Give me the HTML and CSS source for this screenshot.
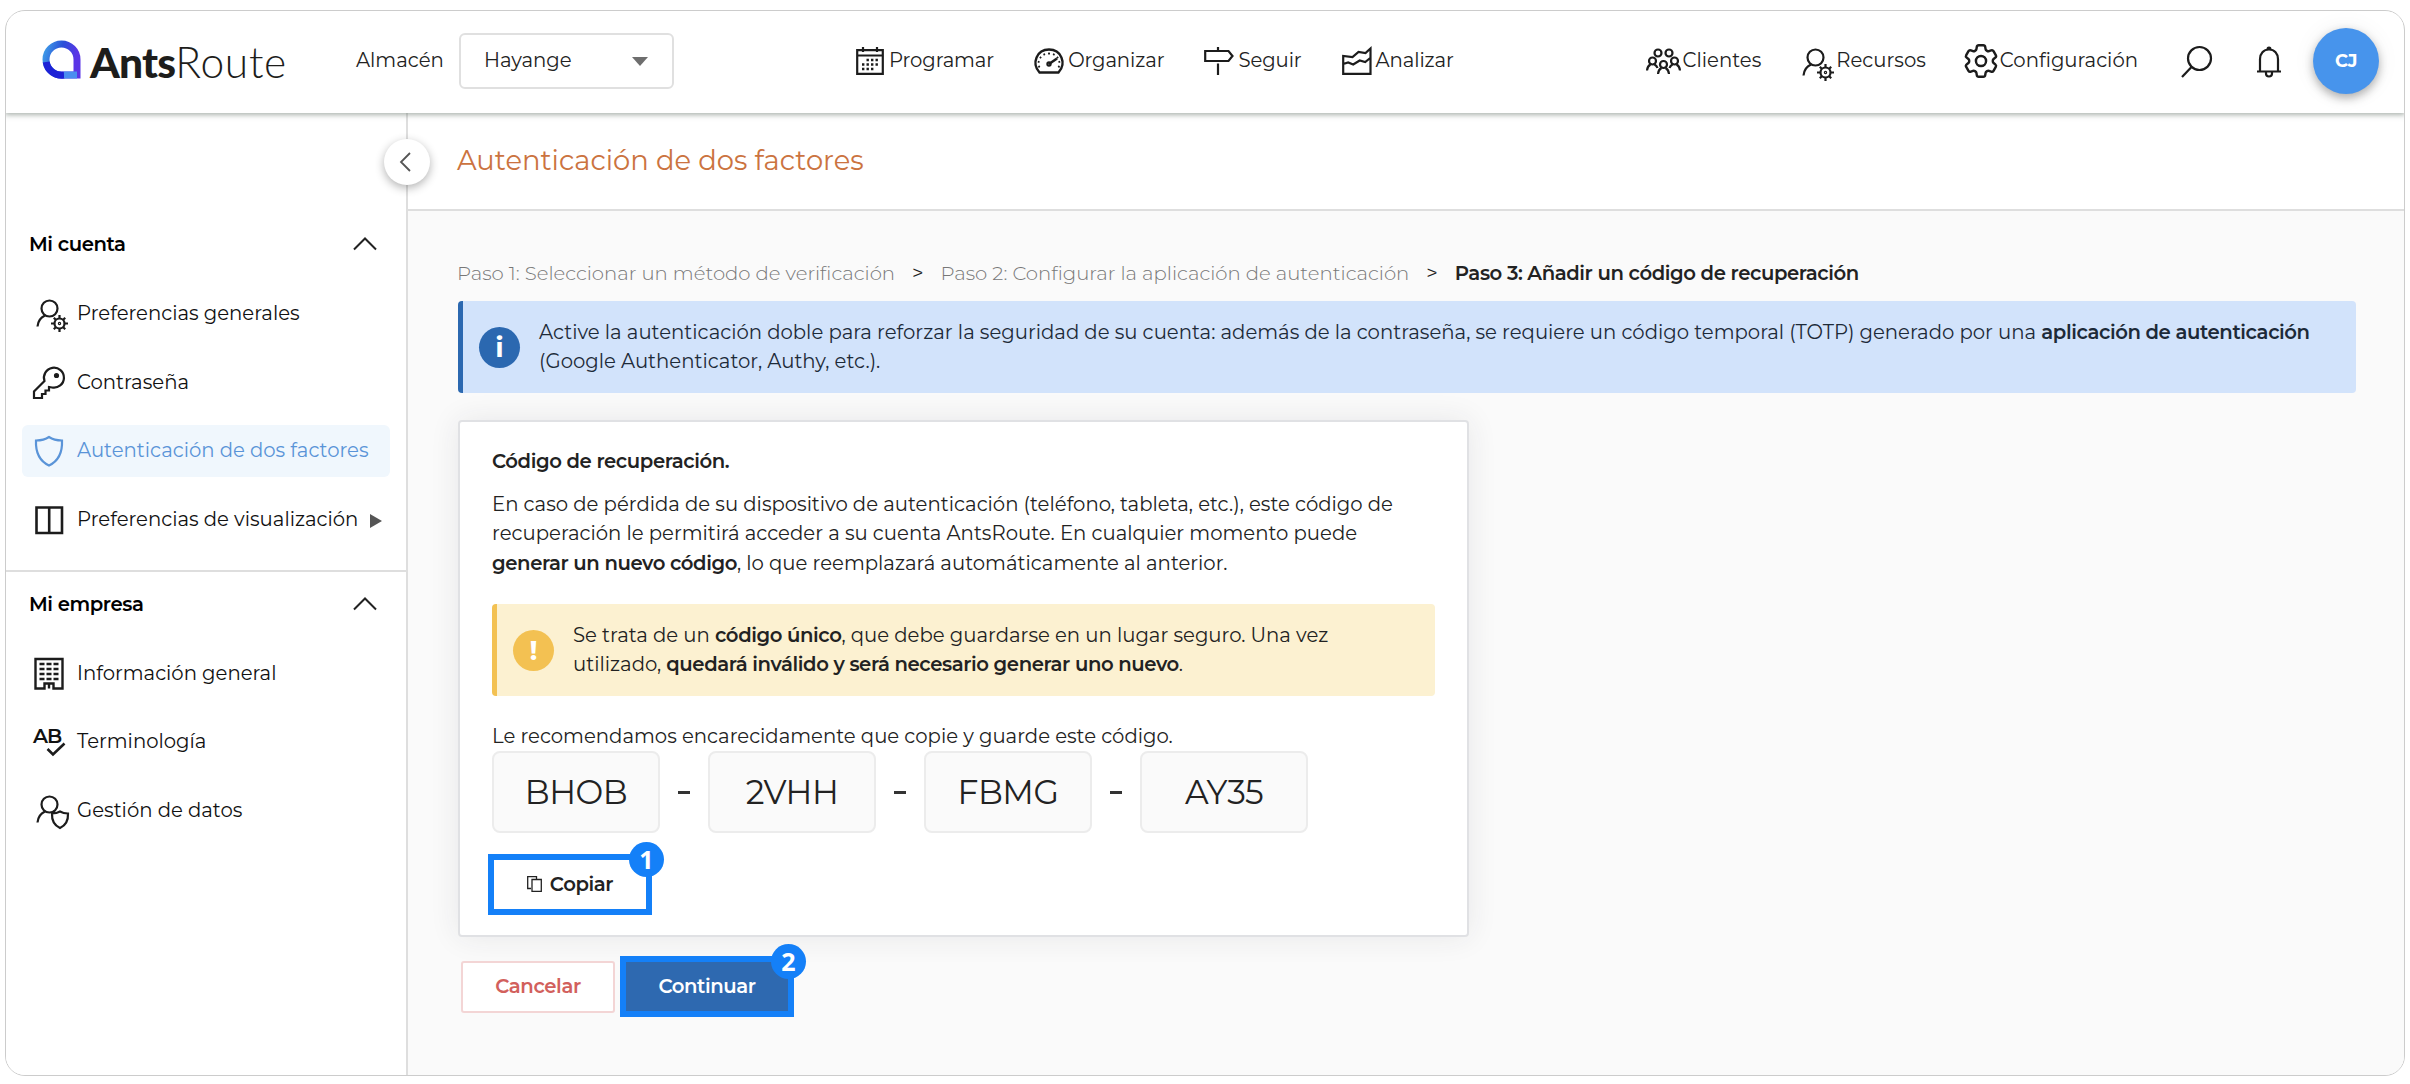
FILE: index.html
```html
<!DOCTYPE html>
<html lang="es">
<head>
    <meta charset="UTF-8">
    <meta name="viewport" content="width=device-width, initial-scale=1.0">
    <title>Autenticación de dos factores - AntsRoute</title>
    <link rel="stylesheet" href="styles.css">
</head>
<body>
    <!-- shared icons -->
    <svg class="sprite">
        <symbol id="user-gear" viewBox="0 0 34 34">
            <circle cx="13.500" cy="9.500" r="8"/>
            <path d="M9 16.500C4.500 18.500 2 22 1.500 27.500"/>
            <circle cx="23.500" cy="24.500" r="5"/>
            <circle cx="23.500" cy="24.500" r=".6"/>
            <path d="M23.500 19.500v-3.500M23.500 29.500v3.500M18.500 24.500h-3.500M28.500 24.500h3.500M20 21l-2.200-2.200M27 28l2.200 2.200M20 28l-2.200 2.200M27 21l2.200-2.200"/>
        </symbol>
        <symbol id="chevron-up" viewBox="0 0 24 14">
            <path d="M1 12.500L12 1.500l11 11"/>
        </symbol>
    </svg>

    <div class="app">
        <header class="header">
            <a class="logo">
                <svg width="39" height="39" viewBox="0 0 39 39">
                    <defs>
                        <linearGradient id="drop" x1="0" y1="0" x2="1" y2=".3">
                            <stop offset="0" stop-color="#3f9be8"/>
                            <stop offset=".5" stop-color="#2a50d8"/>
                            <stop offset="1" stop-color="#5a35e6"/>
                        </linearGradient>
                    </defs>
                    <path d="M35 19.500V35H19.500A15.500 15.500 0 1 1 35 19.500z" fill="none" stroke="url(#drop)" stroke-width="7"/>
                    <path d="M4.200 22A15.500 15.500 0 0 0 22 35" fill="none" stroke="#1d22d6" stroke-width="7"/>
                    <path d="M22 35h13" fill="none" stroke="#4a8df0" stroke-width="7"/>
                </svg>
                <span class="logo-text"><b>Ants</b>Route</span>
            </a>

            <label class="depot-label">Almacén</label>
            <div class="select">
                <span>Hayange</span>
                <i class="caret"></i>
            </div>

            <nav class="nav">
                <a>
                    <svg class="icon icon-calendar" width="28" height="28" viewBox="0 0 28 28">
                        <path d="M1.200 3.200h25.600v23.600H1.200zM1.200 8.500h25.600M7 0v5M21 0v5" stroke-width="2.200"/>
                        <path d="M10.500 13h13M6 17.500h17M6 22h13" stroke-width="2.400" stroke-dasharray="2.400 2.100"/>
                    </svg>
                    Programar
                </a>
                <a>
                    <svg class="icon" width="30" height="26" viewBox="0 0 30 26">
                        <path d="M5.500 24.500C-3 15 3 1.500 15 1.500S33 15 24.500 24.500z" stroke-width="2.400"/>
                        <path d="M5.500 19.500C2.500 13 7 5.500 15 5.500s12.500 7.500 9.500 14" stroke-width="1.800" stroke-dasharray="1.800 3"/>
                        <path d="M15 16l8-5.500" stroke-width="2.600"/>
                        <circle cx="15" cy="16" r="1.600"/>
                    </svg>
                    Organizar
                </a>
                <a>
                    <svg class="icon" width="30" height="28" viewBox="0 0 30 28">
                        <path d="M1.200 4h23.300l4 5-4 5H1.200zM14 0v4M14 16.500V28" stroke-width="2.200"/>
                    </svg>
                    Seguir
                </a>
                <a>
                    <svg class="icon" width="30" height="28" viewBox="0 0 30 28">
                        <path d="M1.200 9v17.800h27.300V1.500l-5 4.500-7-1-6 5zM1.200 17l5-1.500 5 2 6.500-4 5.500 1.500 5-4" stroke-width="2.200"/>
                    </svg>
                    Analizar
                </a>
            </nav>

            <nav class="tools">
                <a>
                    <svg class="icon" width="35" height="26" viewBox="0 0 35 26">
                        <circle cx="12" cy="5" r="3.500"/>
                        <circle cx="23" cy="5" r="3.500"/>
                        <circle cx="6.500" cy="13" r="3.500"/>
                        <circle cx="28.500" cy="13" r="3.500"/>
                        <circle cx="17.500" cy="16.500" r="3.500"/>
                        <path d="M1 22.500c.3-3 1.500-5 3.500-6M8.500 16.500c1.500.8 2.500 2 3 3.500M34 22.500c-.3-3-1.500-5-3.500-6M26.500 16.500c-1.500.8-2.500 2-3 3.500M12 26c.3-3 1.500-5 3.500-6M23 26c-.3-3-1.500-5-3.500-6"/>
                    </svg>
                    Clientes
                </a>
                <a>
                    <svg class="icon icon-resources" width="34" height="34"><use href="#user-gear"/></svg>
                    Recursos
                </a>
                <a>
                    <svg class="icon icon-cog" width="42" height="42" viewBox="0 0 24 24">
                        <path d="M9.594 3.940c.090-.542.560-.940 1.110-.940h2.593c.550 0 1.020.398 1.110.940l.213 1.281c.063.374.313.686.645.870.074.040.147.083.220.127.325.196.720.257 1.075.124l1.217-.456a1.125 1.125 0 0 1 1.370.490l1.296 2.247a1.125 1.125 0 0 1-.260 1.431l-1.003.827c-.293.241-.438.613-.430.992a7.723 7.723 0 0 1 0 .255c-.008.378.137.750.430.991l1.004.827c.424.350.534.955.260 1.430l-1.298 2.247a1.125 1.125 0 0 1-1.369.491l-1.217-.456c-.355-.133-.750-.072-1.076.124a6.470 6.470 0 0 1-.220.128c-.331.183-.581.495-.644.869l-.213 1.281c-.090.543-.560.940-1.110.940h-2.594c-.550 0-1.019-.398-1.110-.940l-.213-1.281c-.062-.374-.312-.686-.644-.870a6.520 6.520 0 0 1-.220-.127c-.325-.196-.720-.257-1.076-.124l-1.217.456a1.125 1.125 0 0 1-1.369-.490l-1.297-2.247a1.125 1.125 0 0 1 .260-1.431l1.004-.827c.292-.240.437-.613.430-.991a6.932 6.932 0 0 1 0-.255c.007-.380-.138-.751-.430-.992l-1.004-.827a1.125 1.125 0 0 1-.260-1.430l1.297-2.247a1.125 1.125 0 0 1 1.370-.491l1.216.456c.356.133.751.072 1.076-.124.072-.044.146-.086.220-.128.332-.183.582-.495.644-.869l.214-1.280z"/>
                        <circle cx="12" cy="12" r="2.900"/>
                    </svg>
                    Configuración
                </a>
                <svg class="icon icon-search" width="32" height="32" viewBox="0 0 32 32">
                    <circle cx="18.500" cy="12.500" r="11.500"/>
                    <path d="M10.500 21L1 31"/>
                </svg>
                <svg class="icon icon-bell" width="26" height="32" viewBox="0 0 26 32">
                    <path d="M1 25.500h24M4 25.500V13c0-5.500 3.500-9.500 9-9.500s9 4 9 9.500v12.500M11.500 3.500c0-2.700 3-2.700 3 0M10 25.500v2a3 3 0 0 0 6 0v-2"/>
                </svg>
                <div class="avatar">CJ</div>
            </nav>
        </header>

        <div class="body">
            <aside class="sidebar">
                <button class="collapse">
                    <svg width="12" height="20" viewBox="0 0 12 20"><path d="M11 1L2 10l9 9"/></svg>
                </button>

                <section class="menu">
                    <h2>Mi cuenta <svg class="chevron" width="24" height="14"><use href="#chevron-up"/></svg></h2>
                    <a>
                        <svg class="icon icon-user" width="34" height="34"><use href="#user-gear"/></svg>
                        Preferencias generales
                    </a>
                    <a>
                        <svg class="icon" width="34" height="34" viewBox="0 0 34 34">
                            <path d="M11.500 15A10 10 0 1 1 19 21.500l-3-.5v3.500h-3.500v3.500H9v4H1v-6.500z"/>
                            <circle cx="23.500" cy="9.500" r="1.500" fill="#111"/>
                        </svg>
                        Contraseña
                    </a>
                    <a class="active">
                        <svg class="icon" width="34" height="34" viewBox="0 0 34 34">
                            <path d="M16 3c4 2.800 8.500 3.500 13 3.500C29.500 18 26.500 26.500 16 31.500 5.500 26.500 2.500 18 3 6.500 7.500 6.500 12 5.800 16 3z"/>
                        </svg>
                        Autenticación de dos factores
                    </a>
                    <a>
                        <svg class="icon" width="34" height="34" viewBox="0 0 34 34">
                            <path d="M3.500 4.500h25.500v25.500H3.500zM16.200 4.500v25.500" stroke-width="2.600"/>
                        </svg>
                        Preferencias de visualización
                        <i class="arrow"></i>
                    </a>
                </section>

                <section class="menu">
                    <h2>Mi empresa <svg class="chevron" width="24" height="14"><use href="#chevron-up"/></svg></h2>
                    <a>
                        <svg class="icon" width="34" height="34" viewBox="0 0 34 34">
                            <path d="M2.500 2h27v29.500h-9v-5h-9v5h-9zM16 26.500v5" stroke-width="2.400"/>
                            <path d="M6.500 7h19M6.500 12h19M6.500 17h19M6.500 22h19" stroke-width="2.600" stroke-dasharray="5 2"/>
                        </svg>
                        Información general
                    </a>
                    <a>
                        <svg class="icon" width="34" height="34" viewBox="0 0 34 34">
                            <text x="0" y="18" class="ab">AB</text>
                            <path d="M14.500 24l5.500 5.500L31.500 18.500" stroke-width="2.600"/>
                        </svg>
                        Terminología
                    </a>
                    <a>
                        <svg class="icon icon-user" width="34" height="34" viewBox="0 0 34 34">
                            <circle cx="13.500" cy="9.500" r="8"/>
                            <path d="M9 16.500C4.500 18.500 2 22 1.500 27.500M17 16.500l2 1"/>
                            <path d="M24 16.500c2.500 1.500 5 2 8 2 .3 6.500-1.500 11.500-8 14.500-6.500-3-8.300-8-8-14.500 3 0 5.500-.5 8-2z"/>
                        </svg>
                        Gestión de datos
                    </a>
                </section>
            </aside>

            <main class="main">
                <div class="title-bar">
                    <h1>Autenticación de dos factores</h1>
                </div>

                <div class="content">
                    <div class="steps">
                        <span class="step">Paso 1: Seleccionar un método de verificación</span>
                        <span class="sep">&gt;</span>
                        <span class="step">Paso 2: Configurar la aplicación de autenticación</span>
                        <span class="sep">&gt;</span>
                        <b>Paso 3: Añadir un código de recuperación</b>
                    </div>

                    <div class="alert alert-info">
                        <span class="alert-icon">i</span>
                        <p>Active la autenticación doble para reforzar la seguridad de su cuenta: además de la contraseña, se requiere un código temporal (TOTP) generado por una <b>aplicación de autenticación</b><br>(Google Authenticator, Authy, etc.).</p>
                    </div>

                    <div class="card">
                        <h3>Código de recuperación.</h3>
                        <p>En caso de pérdida de su dispositivo de autenticación (teléfono, tableta, etc.), este código de<br>recuperación le permitirá acceder a su cuenta AntsRoute. En cualquier momento puede<br><b>generar un nuevo código</b>, lo que reemplazará automáticamente al anterior.</p>

                        <div class="alert alert-warning">
                            <span class="alert-icon">!</span>
                            <p>Se trata de un <b>código único</b>, que debe guardarse en un lugar seguro. Una vez<br>utilizado, <b>quedará inválido y será necesario generar uno nuevo</b>.</p>
                        </div>

                        <p>Le recomendamos encarecidamente que copie y guarde este código.</p>
                        <div class="code">
                            <span>BHOB</span>
                            <i></i>
                            <span>2VHH</span>
                            <i></i>
                            <span>FBMG</span>
                            <i></i>
                            <span>AY35</span>
                        </div>

                        <div class="highlight highlight-copy">
                            <button class="btn">
                                <svg width="15" height="16" viewBox="0 0 15 16">
                                    <path d="M4 12.500H.700V.700h8.800V3M5 3.500h9.300v11.800H5z"/>
                                </svg>
                                Copiar
                            </button>
                            <span class="badge">1</span>
                        </div>
                    </div>

                    <div class="actions">
                        <button class="btn btn-cancel">Cancelar</button>
                        <div class="highlight highlight-next">
                            <button class="btn btn-primary">Continuar</button>
                            <span class="badge">2</span>
                        </div>
                    </div>
                </div>
            </main>
        </div>
    </div>
</body>
</html>
```

FILE: styles.css
```css
* {
    box-sizing: border-box;
}
body {
    margin: 0;
    padding: 10px 5px 8px;
    background-color: #fff;
    font-family: Montserrat, Inter, "Open Sans", sans-serif;
    font-size: 19.65px;
    line-height: 29.4px;
    color: #222;
}
h1, h2, h3, p {
    margin: 0;
    font-weight: normal;
}
b {
    font-weight: 600;
    letter-spacing: -0.4px;
}
.sprite {
    display: none;
}
.icon {
    flex: none;
    fill: none;
    stroke: #1c1c1c;
    stroke-width: 2.2;
    overflow: visible;
}
.app {
    display: flex;
    flex-direction: column;
    height: 1066px;
    border: 1px solid #ccc;
    border-radius: 20px;
    overflow: hidden;
}

/* header */
.header {
    display: flex;
    align-items: center;
    flex: none;
    height: 102px;
    padding: 0 25px 2px 36px;
    background-color: #fff;
    box-shadow: 0 1px 5px 1px rgba(90, 105, 95, 0.5);
    position: relative;
    z-index: 2;
}
.logo {
    display: flex;
    align-items: center;
    width: 314px;
    margin-top: -4px;
}
.logo-text {
    margin-left: 9px;
    padding-top: 6px;
    font-family: Lato, sans-serif;
    font-size: 42.5px;
    font-weight: 300;
    line-height: 46px;
    letter-spacing: 0.7px;
    color: #1d1d1b;
}
.logo-text b {
    font-weight: 900;
    letter-spacing: -0.8px;
}
.depot-label {
    width: 103px;
}
.select {
    display: flex;
    align-items: center;
    justify-content: space-between;
    width: 215px;
    height: 56px;
    padding: 0 24px 0 23px;
    border: 2px solid #e0e0e0;
    border-radius: 6px;
}
.caret {
    border: 8px solid transparent;
    border-top: 9px solid #6e6e6e;
    border-bottom: 0;
}
.nav {
    display: flex;
    gap: 40px;
    margin-left: 182px;
    letter-spacing: -0.1px;
}
.nav a, .tools a {
    display: flex;
    align-items: center;
    gap: 4px;
}
.icon-calendar {
    margin-right: 1px;
}
.tools {
    display: flex;
    align-items: center;
    margin-left: auto;
}
.tools a {
    gap: 2px;
    margin-right: 40px;
}
.icon-resources {
    margin: 7px -2px 0 1px;
}
.icon-cog {
    margin: 0 -4px 0 -6px;
    stroke-width: 1.4;
}
.icon-search {
    margin: 2px 43px 0 3px;
}
.icon-bell {
    margin: 2px 31px 0 0;
}
.avatar {
    width: 66px;
    height: 66px;
    border-radius: 50%;
    background-color: #4794ec;
    color: #fff;
    font-size: 18px;
    font-weight: 700;
    line-height: 66px;
    text-align: center;
    letter-spacing: -0.5px;
    box-shadow: 0 4px 10px rgba(0, 0, 0, 0.3), 0 0 24px rgba(0, 0, 0, 0.06);
}

/* sidebar */
.body {
    display: flex;
    flex: 1;
}
.sidebar {
    position: relative;
    width: 402px;
    border-right: 2px solid #dedede;
    background-color: #fff;
    color: #111;
}
.collapse {
    position: absolute;
    top: 26px;
    right: -24px;
    width: 46px;
    height: 46px;
    padding: 0;
    border: none;
    border-radius: 50%;
    background-color: #fff;
    box-shadow: 0 3px 10px rgba(0, 0, 0, 0.3);
}
.collapse svg {
    display: block;
    margin-left: 15px;
    fill: none;
    stroke: #555;
    stroke-width: 1.8;
}
.menu {
    padding: 18px 16px 24px;
}
.menu:first-of-type {
    padding-top: 117px;
    border-bottom: 2px solid #dedede;
}
.menu h2 {
    display: flex;
    align-items: center;
    justify-content: space-between;
    height: 30px;
    margin-bottom: 28px;
    padding: 0 13px 0 7px;
    font-size: 19.65px;
    font-weight: 600;
    letter-spacing: -0.4px;
    color: #000;
}
.chevron {
    margin-bottom: 2px;
    fill: none;
    stroke: #222;
    stroke-width: 2;
}
.menu a {
    display: flex;
    align-items: center;
    height: 52px;
    margin-bottom: 16.5px;
    padding-left: 11px;
    border-radius: 6px;
}
.menu a:last-child {
    margin-bottom: 0;
}
.menu a .icon {
    margin-right: 10px;
}
.menu a .icon-user {
    margin: 3px 7px 0 3px;
}
.menu .active {
    background-color: #f0f7fd;
    color: #5a94d8;
}
.active .icon {
    stroke: #5a94d8;
}
.arrow {
    margin: 2px 0 0 12px;
    border: 7px solid transparent;
    border-left: 12px solid #555;
    border-right: 0;
}
.ab {
    font-size: 20px;
    font-weight: 600;
    fill: #111;
    stroke: none;
    letter-spacing: -1px;
}

/* main */
.main {
    flex: 1;
    background-color: #fafafa;
}
.title-bar {
    display: flex;
    align-items: center;
    height: 98px;
    padding-left: 49px;
    border-bottom: 2px solid #dedede;
    background-color: #fff;
}
h1 {
    font-size: 27.4px;
    color: #cb7340;
}
.content {
    padding: 48px 48px 0 50px;
}
.steps {
    display: flex;
    margin: 0 0 13px -1px;
}
.step {
    font-weight: 300;
    color: #777;
}
.sep {
    margin: 0 17px;
    font-size: 20px;
}
.alert {
    display: flex;
    align-items: center;
    height: 92px;
    border-radius: 4px;
}
.alert-icon {
    flex: none;
    width: 41px;
    height: 41px;
    margin: 0 19px 0 16px;
    border-radius: 50%;
    color: #fff;
    font-size: 28px;
    font-weight: 700;
    line-height: 41px;
    text-align: center;
}
.alert-info {
    border-left: 5px solid #2b68b0;
    background-color: #d2e3fb;
    color: #1d2a38;
}
.alert-info .alert-icon {
    background-color: #2b68b0;
}
.alert-warning {
    margin: 26px 0;
    border-left: 5px solid #f3c152;
    background-color: #fcf1d1;
}
.alert-warning .alert-icon {
    background-color: #f3c152;
}
.card {
    width: 1011px;
    height: 517px;
    margin-top: 27px;
    padding: 25px 32px 0;
    border: 2px solid #e0e1e4;
    border-radius: 4px;
    background-color: #fff;
    box-shadow: 0 0 30px rgba(40, 40, 60, 0.09);
}
.card h3 {
    margin-bottom: 13px;
    font-size: 19.65px;
    font-weight: 600;
    letter-spacing: -0.4px;
}
.code {
    display: flex;
    align-items: center;
}
.code span {
    width: 168px;
    height: 82px;
    border: 2px solid #ececec;
    border-radius: 8px;
    background-color: #fafafa;
    font-size: 33px;
    line-height: 79px;
    letter-spacing: -0.5px;
    text-align: center;
}
.code i {
    width: 12px;
    height: 3px;
    margin: 0 18px;
    background-color: #333;
}
.highlight {
    position: relative;
    border: 6px solid #1480f8;
}
.highlight-copy {
    width: 164px;
    height: 61px;
    margin: 21px 0 0 -4px;
}
.highlight-next {
    width: 174px;
    height: 61px;
    margin-left: 5px;
}
.badge {
    position: absolute;
    top: -18px;
    right: -18px;
    width: 35px;
    height: 35px;
    border-radius: 50%;
    background-color: #1480f8;
    color: #fff;
    font-family: "Open Sans", sans-serif;
    font-size: 25px;
    font-weight: 700;
    line-height: 35px;
    text-align: center;
}
.btn {
    display: flex;
    align-items: center;
    justify-content: center;
    gap: 8px;
    width: 100%;
    height: 100%;
    padding: 0 0 1px;
    border: none;
    background-color: #fff;
    color: #222;
    font-family: inherit;
    font-size: 19.65px;
    font-weight: 600;
    letter-spacing: -0.4px;
}
.btn svg {
    fill: none;
    stroke: #222;
    stroke-width: 1.3;
}
.actions {
    display: flex;
    align-items: center;
    margin: 19px 0 0 3px;
}
.btn-cancel {
    width: 154px;
    height: 52px;
    border: 2px solid #f3d5d5;
    border-radius: 3px;
    color: #d2605c;
}
.btn-primary {
    background-color: #2e69b0;
    color: #fff;
}
```
